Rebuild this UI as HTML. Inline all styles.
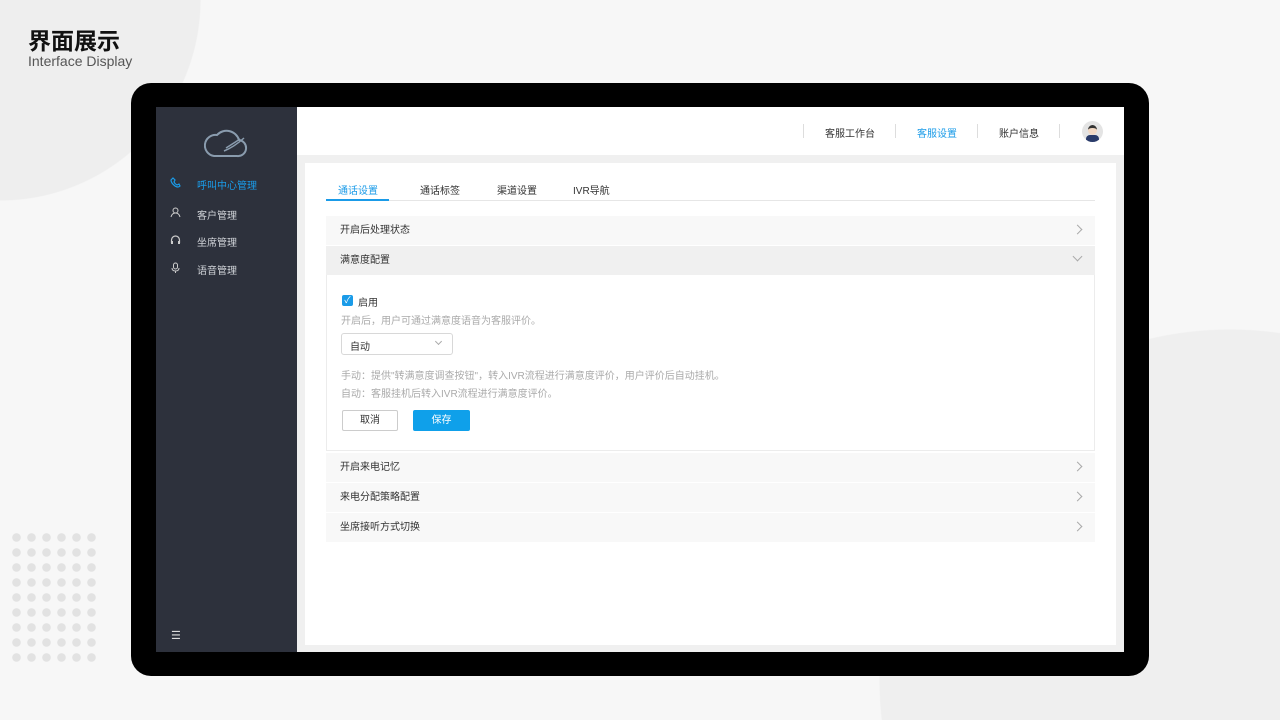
<!DOCTYPE html>
<html style="width:1280px;height:720px;overflow:hidden"><head><meta charset="utf-8"><style>
*{margin:0;padding:0;box-sizing:border-box}
body{width:1280px;height:720px;overflow:hidden;font-family:"Liberation Sans","Noto Sans CJK SC",sans-serif;font-size:10px;color:#333}
#wrap{position:relative;width:1280px;height:720px;overflow:hidden;background:radial-gradient(circle at 0 0,#eeeeee 200px,transparent 201px),radial-gradient(circle at 1230px 680px,#efefef 350px,transparent 351px),#f7f7f7}
.abs{position:absolute}
.frame{left:131px;top:83px;width:1018px;height:593px;background:#000;border-radius:20px}
.screen{left:156px;top:107px;width:968px;height:545px;background:#f0f0f0;overflow:hidden}
.side{left:0;top:0;width:141px;height:545px;background:#2d313c}
.nav{position:absolute;left:41px;color:#d0d3d8;font-size:10px}
.hdr{left:141px;top:0;width:827px;height:48px;background:#fff}
.card{left:149px;top:56px;width:811px;height:482px;background:#fff}
.row{position:absolute;left:21px;width:769px;height:29px;background:#f8f8f8;padding-left:14px;line-height:29px;font-size:10px;color:#333}
.chev{position:absolute;right:14px;top:10px;width:7px;height:7px;border-right:1px solid #aaa;border-top:1px solid #aaa;transform:rotate(45deg)}
.dots{left:9px;top:530px;width:90px;height:135px;background-image:radial-gradient(circle,#e2e2e2 4px,transparent 4.5px);background-size:15px 15px}
</style></head><body><div id="wrap">
<div class="abs dots"></div>
<div class="abs" style="left:28px;top:22px;font-size:23px;font-weight:bold;color:#111">界面展示</div>
<div class="abs" style="left:28px;top:53px;font-size:14px;color:#555">Interface Display</div>
<div class="abs frame"></div>
<div class="abs screen">
 <div class="abs side">
  <svg class="abs" style="left:48px;top:18px" width="44" height="34" viewBox="0 0 44 34"><path d="M10 31 H33 A8 8 0 0 0 35 15 A13 13 0 0 0 13 10 A9 9 0 0 0 10 31 Z" fill="none" stroke="#8a9cae" stroke-width="2"/><path d="M20 26 Q30 22 40 13 M22 23 Q30 18 36 14" fill="none" stroke="#8a9cae" stroke-width="1.5"/></svg>
  <div class="nav" style="top:70px;color:#1a9be8">呼叫中心管理</div>
  <svg class="abs" style="left:14px;top:70px" width="11" height="11" viewBox="0 0 11 11"><path d="M3 1 L5 3 L4 5 Q5 7 7 8 L9 7 L10 9 Q8 11 5 9 Q1 6 1 3 Z" fill="none" stroke="#1a9be8" stroke-width="1.2"/></svg>
  <div class="nav" style="top:100px">客户管理</div>
  <svg class="abs" style="left:14px;top:100px" width="11" height="11" viewBox="0 0 11 11"><circle cx="5.5" cy="3.5" r="2.5" fill="none" stroke="#ccc"/><path d="M1 10 Q2 6 5.5 6 Q9 6 10 10" fill="none" stroke="#ccc"/></svg>
  <div class="nav" style="top:127px">坐席管理</div>
  <svg class="abs" style="left:14px;top:127px" width="11" height="11" viewBox="0 0 11 11"><path d="M1.5 9 V6 A4 4 0 0 1 9.5 6 V9" fill="none" stroke="#ccc" stroke-width="1.2"/><rect x="1" y="7" width="2" height="3" fill="#ccc"/><rect x="8" y="7" width="2" height="3" fill="#ccc"/></svg>
  <div class="nav" style="top:155px">语音管理</div>
  <svg class="abs" style="left:14px;top:155px" width="11" height="12" viewBox="0 0 11 12"><rect x="3.5" y="1" width="4" height="6" rx="2" fill="none" stroke="#ccc"/><path d="M2 6 Q2 9 5.5 9 Q9 9 9 6 M5.5 9 V11" fill="none" stroke="#ccc"/></svg>
  <div class="abs" style="left:15px;top:522px;color:#ddd;font-size:11px">☰</div>
 </div>
 <div class="abs hdr">
  <div class="abs" style="left:506px;top:17px;width:1px;height:14px;background:#ddd"></div>
  <div class="abs" style="left:528px;top:18px;color:#333">客服工作台</div>
  <div class="abs" style="left:598px;top:17px;width:1px;height:14px;background:#ddd"></div>
  <div class="abs" style="left:620px;top:18px;color:#1a9be8">客服设置</div>
  <div class="abs" style="left:680px;top:17px;width:1px;height:14px;background:#ddd"></div>
  <div class="abs" style="left:702px;top:18px;color:#333">账户信息</div>
  <div class="abs" style="left:762px;top:17px;width:1px;height:14px;background:#ddd"></div>
  <div class="abs" style="left:785px;top:14px;width:21px;height:21px;border-radius:50%;background:#e4e4e4;overflow:hidden"><div class="abs" style="left:6px;top:4px;width:9px;height:10px;border-radius:50%;background:#f3d9c4;border-top:3px solid #333"></div><div class="abs" style="left:4px;top:14px;width:13px;height:7px;border-radius:4px 4px 0 0;background:#2a3b6a"></div></div>
 </div>
 <div class="abs card">
  <div class="abs" style="left:33px;top:19px;color:#1a9be8">通话设置</div>
  <div class="abs" style="left:115px;top:19px">通话标签</div>
  <div class="abs" style="left:192px;top:19px">渠道设置</div>
  <div class="abs" style="left:268px;top:19px">IVR导航</div>
  <div class="abs" style="left:21px;top:37px;width:769px;height:1px;background:#e6e6e6"></div>
  <div class="abs" style="left:21px;top:36px;width:63px;height:2px;background:#1a9be8"></div>
  <div class="row" style="top:53px">开启后处理状态<i class="chev"></i></div>
  <div class="row" style="top:83px;background:#f0f0f0">满意度配置<i class="chev" style="transform:rotate(135deg);top:7px"></i></div>
  <div class="abs" style="left:21px;top:112px;width:769px;height:176px;border:1px solid #ececec;border-top:none"></div>
  <div class="abs" style="left:37px;top:132px;width:11px;height:11px;background:#1a9be8;border-radius:2px;color:#fff;font-size:9px;line-height:11px;text-align:center">✓</div>
  <div class="abs" style="left:53px;top:131px">启用</div>
  <div class="abs" style="left:36px;top:149px;color:#aaa">开启后，用户可通过满意度语音为客服评价。</div>
  <div class="abs" style="left:36px;top:170px;width:112px;height:22px;border:1px solid #d8d8d8;border-radius:3px;padding:4px 0 0 8px">自动<span class="abs" style="left:94px;top:5px;width:5px;height:5px;border-right:1px solid #aaa;border-bottom:1px solid #aaa;transform:rotate(45deg)"></span></div>
  <div class="abs" style="left:36px;top:204px;color:#aaa">手动：提供"转满意度调查按钮"，转入IVR流程进行满意度评价，用户评价后自动挂机。</div>
  <div class="abs" style="left:36px;top:222px;color:#aaa">自动：客服挂机后转入IVR流程进行满意度评价。</div>
  <div class="abs" style="left:37px;top:247px;width:56px;height:21px;border:1px solid #ccc;border-radius:2px;text-align:center;line-height:19px">取消</div>
  <div class="abs" style="left:108px;top:247px;width:57px;height:21px;background:#0fa0ea;border-radius:2px;text-align:center;line-height:21px;color:#fff">保存</div>
  <div class="row" style="top:290px">开启来电记忆<i class="chev"></i></div>
  <div class="row" style="top:320px">来电分配策略配置<i class="chev"></i></div>
  <div class="row" style="top:350px">坐席接听方式切换<i class="chev"></i></div>
 </div>
</div>
</div></body></html>
